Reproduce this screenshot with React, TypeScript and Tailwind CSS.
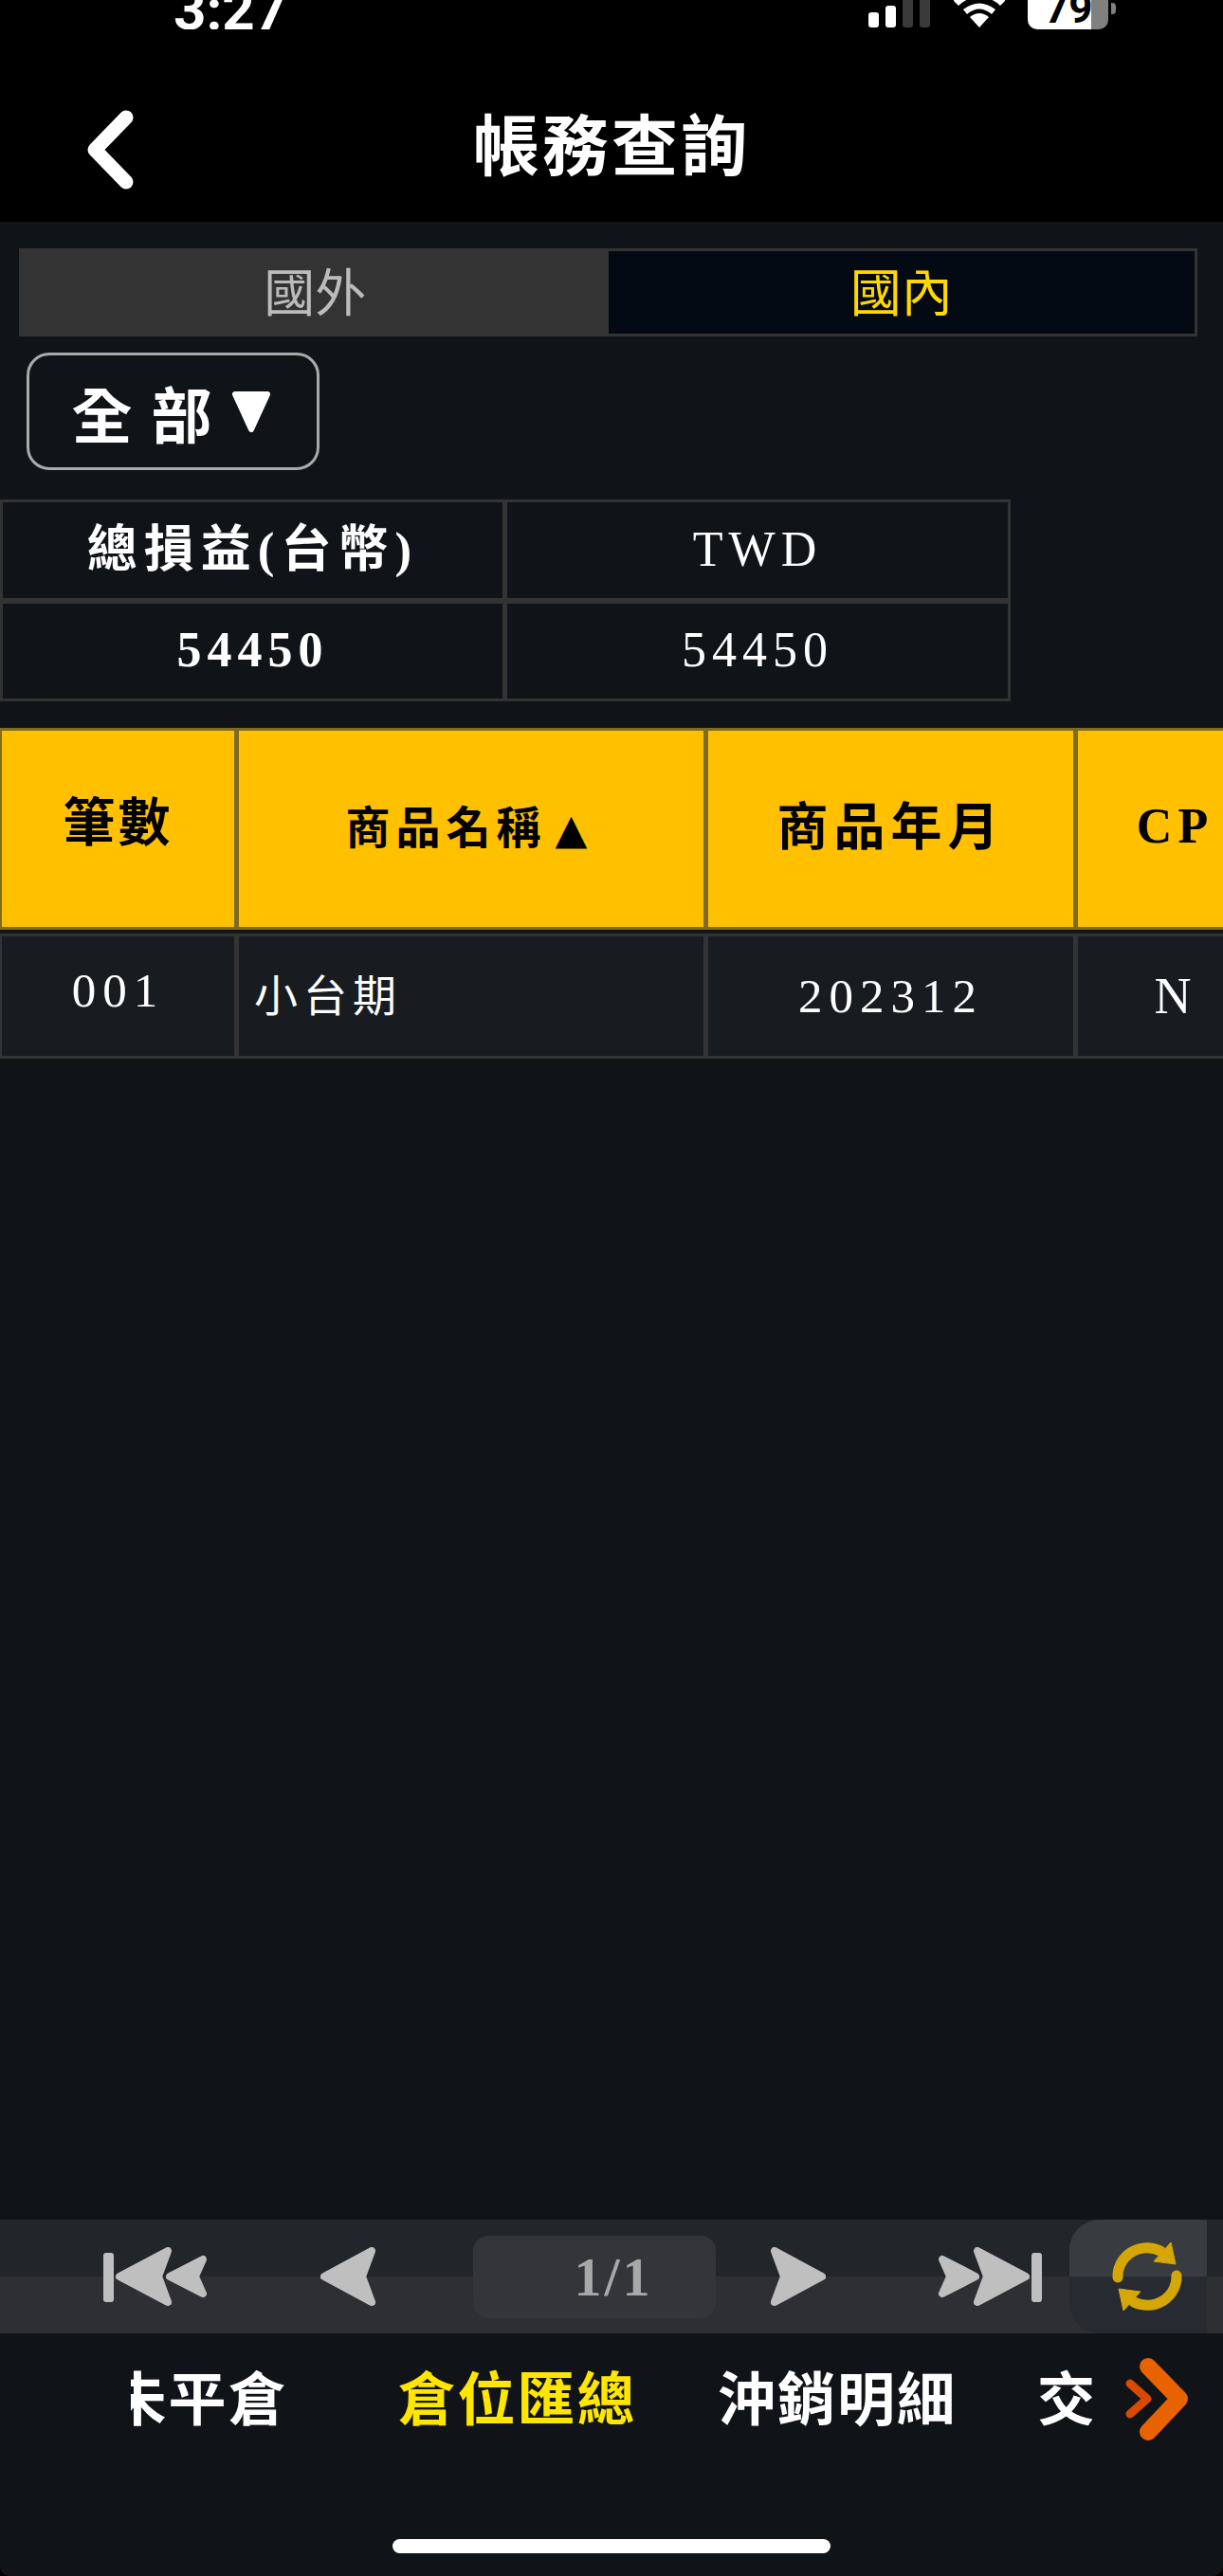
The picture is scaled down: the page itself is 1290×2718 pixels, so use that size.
const serif = "font-['Liberation_Serif','Noto_Sans_CJK_TC',serif]";
const sans = "font-['Noto_Sans_CJK_TC','Liberation_Sans',sans-serif]";

function StatusBar() {
  return (
    <div className="flex h-[31px] items-end overflow-hidden">
      <span className="ml-[183px] mb-[-9px] w-[121px] font-['Roboto',sans-serif] text-[60px] leading-[58px] font-bold text-white">
        3:27
      </span>
      <div className="ml-[612px] flex h-[29px] items-end gap-[7px] self-start">
        <div className="h-[16px] w-[11px] rounded-[3px] bg-white" />
        <div className="h-[23px] w-[11px] rounded-[3px] bg-white" />
        <div className="h-[29px] w-[11px] rounded-b-[3px] bg-[#3a3a3a]" />
        <div className="h-[29px] w-[11px] rounded-b-[3px] bg-[#3a3a3a]" />
      </div>
      <svg className="ml-[23px] self-start" width="58" height="30" viewBox="0 0 58 30">
        <path d="M29 29 L19 18 Q29 10 39 18 Z" fill="#fff" />
        <path d="M12 10 Q29 -3 46 10 L42 15 Q29 4 16 15 Z" fill="#fff" />
        <path d="M2 1 L7 6 Q16 -3 29 -3 L2 -3 Z" fill="#fff" />
        <path d="M56 1 L51 6 Q42 -3 29 -3 L56 -3 Z" fill="#fff" />
      </svg>
      <div className="relative ml-[22px] h-[31px] w-[85px] self-start overflow-hidden rounded-b-[10px] bg-[linear-gradient(90deg,#fff_79%,#808080_79%)]">
        <span className="absolute bottom-0 left-[18px] font-['Roboto',sans-serif] text-[44px] leading-[44px] font-bold text-black">
          79
        </span>
      </div>
      <div className="ml-[3px] mt-[3px] h-[12px] w-[5px] self-start rounded-r-[4px] bg-[#808080]" />
    </div>
  );
}

function TitleBar() {
  return (
    <div className="relative flex h-[203px] justify-center">
      <svg className="absolute left-[86px] top-[81px]" width="60" height="94" viewBox="0 0 60 94">
        <polyline
          points="47,12 14,46 47,80"
          fill="none"
          stroke="#fff"
          strokeWidth="15"
          strokeLinecap="round"
          strokeLinejoin="round"
        />
      </svg>
      <h1 className={`${sans} mt-[75px] text-[70px] leading-[88px] font-bold tracking-[3px] text-white`}>帳務查詢</h1>
    </div>
  );
}

function SummaryCell({ bold, left, className, children }: { bold?: boolean; left?: boolean; className?: string; children: React.ReactNode }) {
  return (
    <div
      className={`flex items-center justify-center border-y-[3px] border-r-[3px] border-[#333] text-white ${
        left ? "border-l-[3px]" : "border-l-[2px]"
      } ${bold ? "font-bold" : "font-normal"} ${className ?? ""}`}
    >
      {children}
    </div>
  );
}

function HeadCell({ className, children }: { className?: string; children: React.ReactNode }) {
  return (
    <div className={`flex items-center justify-center border-y-[3px] border-l-[2px] border-r-[3px] border-[#7f6b20] bg-[#ffc000] font-bold text-black ${className ?? ""}`}>
      {children}
    </div>
  );
}

function BodyCell({ className, children }: { className?: string; children: React.ReactNode }) {
  return (
    <div className={`flex items-center border-y-[3px] border-l-[2px] border-r-[3px] border-[#333] bg-[#181c20] text-white ${className ?? ""}`}>
      {children}
    </div>
  );
}

function GoIcon({ width, height, children }: { width: number; height: number; children: React.ReactNode }) {
  return (
    <svg width={width} height={height} viewBox={`0 0 ${width} ${height}`} fill="#bfbfbf" stroke="#bfbfbf" strokeWidth="8" strokeLinejoin="round">
      {children}
    </svg>
  );
}

function Pager() {
  return (
    <div className="relative flex h-[120px] items-center bg-[linear-gradient(#22262a_50%,#2e2f32_50%)] pl-[109px]">
      <GoIcon width={110} height={62}>
        <rect x="0" y="6" width="11" height="52" rx="3" stroke="none" />
        <path d="M17 31 L68 4 L58 31 L68 58 Z" />
        <path d="M70 31 L105 13 L97 31 L105 49 Z" />
      </GoIcon>
      <div className="ml-[119px]">
        <GoIcon width={58} height={62}>
          <path d="M4 31 L54 4 L44 31 L54 58 Z" />
        </GoIcon>
      </div>
      <div className={`${serif} ml-[103px] flex h-[87px] w-[256px] items-center justify-center rounded-[16px] bg-[#343538] pl-[40px] text-[58px] font-bold tracking-[3px] text-[#a8a8a8]`}>
        1/1
      </div>
      <div className="ml-[58px]">
        <GoIcon width={58} height={62}>
          <path d="M54 31 L4 4 L14 31 L4 58 Z" />
        </GoIcon>
      </div>
      <div className="ml-[118px]">
        <GoIcon width={110} height={62}>
          <path d="M40 31 L5 13 L13 31 L5 49 Z" />
          <path d="M93 31 L42 4 L52 31 L42 58 Z" />
          <rect x="99" y="6" width="11" height="52" rx="3" stroke="none" />
        </GoIcon>
      </div>
      {/* refresh button sits over the pager */}
      <div className="absolute left-[1128px] top-0 flex h-[120px] w-[145px] items-center justify-center rounded-l-[32px] bg-[linear-gradient(#383b40_50%,#272a30_50%)] pl-[18px]">
        <svg width="80" height="80" viewBox="-40 -40 80 80" fill="#d4a706" stroke="#d4a706" strokeLinejoin="round">
          <g>
            <path d="M-31 1 A31 30 0 0 1 14 -27" fill="none" strokeWidth="11" strokeLinecap="round" />
            <path d="M25 -36 L30 -13 L7 -16 Z" strokeWidth="1" />
          </g>
          <g transform="rotate(180)">
            <path d="M-31 1 A31 30 0 0 1 14 -27" fill="none" strokeWidth="11" strokeLinecap="round" />
            <path d="M25 -36 L30 -13 L7 -16 Z" strokeWidth="1" />
          </g>
        </svg>
      </div>
    </div>
  );
}

function NavTabs() {
  return (
    <div className="relative h-[256px]">
      <div className="ml-[138px] w-[1014px] overflow-hidden pt-[24px]">
        <div className={`${sans} ml-[-97px] flex text-[61px] leading-[84px] font-bold tracking-[2px] text-white`}>
          <span className="w-[336px] shrink-0 text-center">未平倉</span>
          <span className="w-[337px] shrink-0 text-center text-[#ffe600]">倉位匯總</span>
          <span className="w-[338px] shrink-0 text-center">沖銷明細</span>
          <span className="w-[336px] shrink-0 text-center">交易明細</span>
        </div>
      </div>
      <svg className="absolute left-[1180px] top-[18px]" width="90" height="104" viewBox="0 0 90 104">
        <polyline points="12,35 30,51 12,67" fill="none" stroke="#d94a00" strokeWidth="9" strokeLinecap="round" strokeLinejoin="round" />
        <polyline points="31,17 64,51 31,86" fill="none" stroke="#e86200" strokeWidth="18" strokeLinecap="round" strokeLinejoin="round" />
      </svg>
      <div className="absolute left-[414px] top-[217px] h-[15px] w-[462px] rounded-full bg-white" />
    </div>
  );
}

export default function App() {
  return (
    <div className={`${serif} h-[2718px] w-[1290px] overflow-hidden bg-black`}>
      <div className="flex h-full flex-col overflow-hidden rounded-b-[10px] bg-[#101418]">
        <header className="bg-black">
          <StatusBar />
          <TitleBar />
        </header>

        <div className={`${sans} ml-[20px] mt-[28px] flex h-[93px] w-[1243px] border-[3px] border-[#333] text-[54px] leading-[1]`}>
          <div className="flex flex-1 items-center justify-center bg-[#333] pb-[6px] font-normal text-[#bbb]">國外</div>
          <div className="flex flex-1 items-center justify-center bg-[#030a13] pb-[6px] font-normal text-[#ffd800]">國內</div>
        </div>

        <div className={`${sans} ml-[28px] mt-[17px] flex h-[124px] w-[309px] items-center justify-center rounded-[24px] border-[3px] border-[#aaa] pr-[10px] text-[64px] leading-[1] font-bold text-white`}>
          <span className="tracking-[20px]">全部</span>
          <svg width="42" height="44" viewBox="0 0 42 44" className="mr-[-6px]">
            <path d="M4 4 L38 4 L21 41 Z" fill="#fff" stroke="#fff" strokeWidth="6" strokeLinejoin="round" />
          </svg>
        </div>

        <div className="mt-[31px] grid h-[213px] w-[1066px] grid-cols-[533px_533px] grid-rows-2">
          <SummaryCell bold left className="text-[53px] tracking-[7px]">總損益(台幣)</SummaryCell>
          <SummaryCell className="text-[52px] tracking-[6px]">TWD</SummaryCell>
          <SummaryCell bold left className="pb-[2px] text-[52px] tracking-[6px]">54450</SummaryCell>
          <SummaryCell className="pb-[2px] text-[52px] tracking-[6px]">54450</SummaryCell>
        </div>

        <div className="w-[1290px] overflow-hidden">
          <div className="mt-[28px] grid h-[213px] w-[1345px] grid-cols-[250px_495px_390px_210px]">
            <HeadCell className="pb-[10px] text-[55px] tracking-[3px]">筆數</HeadCell>
            <HeadCell className="pr-[10px] text-[47px] tracking-[6px]">
              商品名稱<span className="ml-[9px] font-['DejaVu_Sans',sans-serif] text-[44px] tracking-normal">▲</span>
            </HeadCell>
            <HeadCell className="text-[54px] tracking-[6px]">商品年月</HeadCell>
            <HeadCell className="pb-[6px] text-[52px] tracking-[6px]">CP</HeadCell>
          </div>
          <div className="mt-[4px] grid h-[132px] w-[1345px] grid-cols-[250px_495px_390px_210px]">
            <BodyCell className="justify-center pb-[12px] text-[51px] tracking-[7px]">001</BodyCell>
            <BodyCell className="pl-[16px] text-[46px] tracking-[6px]">小台期</BodyCell>
            <BodyCell className="justify-center text-[51px] tracking-[7px]">202312</BodyCell>
            <BodyCell className="justify-center pr-[5px] text-[54px]">N</BodyCell>
          </div>
        </div>

        <div className="flex-1" />
        <Pager />
        <NavTabs />
      </div>
    </div>
  );
}
